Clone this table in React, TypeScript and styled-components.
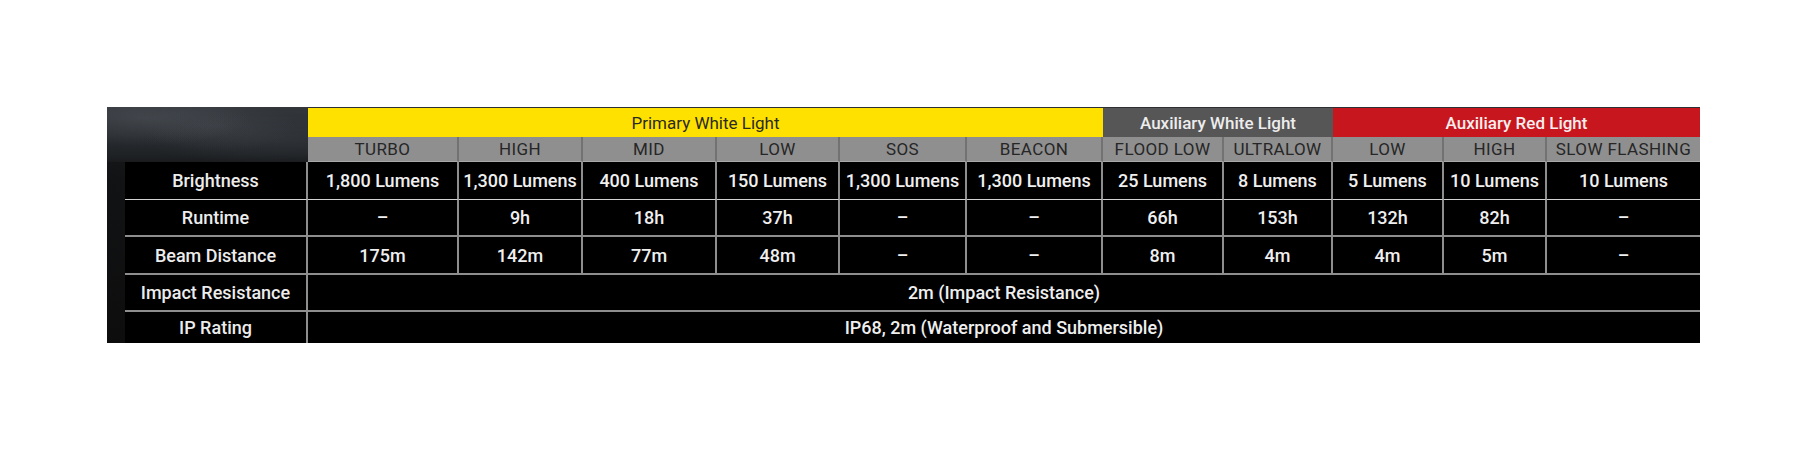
import styled, { createGlobalStyle } from "styled-components";

const GlobalStyle = createGlobalStyle`
  html, body {
    margin: 0;
    padding: 0;
    background: #ffffff;
  }
  body {
    font-family: Roboto, "Liberation Sans", Arial, sans-serif;
  }
`;

type Group = { title: string; span: number; tone: "yellow" | "gray" | "red" };

const groups: Group[] = [
  { title: "Primary White Light", span: 6, tone: "yellow" },
  { title: "Auxiliary White Light", span: 2, tone: "gray" },
  { title: "Auxiliary Red Light", span: 3, tone: "red" },
];

const modes = [
  "TURBO",
  "HIGH",
  "MID",
  "LOW",
  "SOS",
  "BEACON",
  "FLOOD LOW",
  "ULTRALOW",
  "LOW",
  "HIGH",
  "SLOW FLASHING",
];

type SpecRow = {
  label: string;
  values?: string[];
  full?: string;
  line: "thin" | "thick" | "none";
};

const rows: SpecRow[] = [
  {
    label: "Brightness",
    values: [
      "1,800 Lumens",
      "1,300 Lumens",
      "400 Lumens",
      "150 Lumens",
      "1,300 Lumens",
      "1,300 Lumens",
      "25 Lumens",
      "8 Lumens",
      "5 Lumens",
      "10 Lumens",
      "10 Lumens",
    ],
    line: "thin",
  },
  {
    label: "Runtime",
    values: ["–", "9h", "18h", "37h", "–", "–", "66h", "153h", "132h", "82h", "–"],
    line: "thick",
  },
  {
    label: "Beam Distance",
    values: ["175m", "142m", "77m", "48m", "–", "–", "8m", "4m", "4m", "5m", "–"],
    line: "thick",
  },
  { label: "Impact Resistance", full: "2m (Impact Resistance)", line: "thick" },
  { label: "IP Rating", full: "IP68, 2m (Waterproof and Submersible)", line: "none" },
];

const groupColors = {
  yellow: { bg: "#ffe100", fg: "#2a2a22", weight: 400 },
  gray: { bg: "#565656", fg: "#ededed", weight: 500 },
  red: { bg: "#c8161e", fg: "#f6eeee", weight: 500 },
};

const lineStyles = {
  thin: "1px solid #d2d2d2",
  thick: "2px solid #8e8e8e",
  none: "none",
};

export default function App() {
  return (
    <Page>
      <GlobalStyle />
      <Sheet>
        <Corner />
        {groups.map((g) => (
          <GroupCell key={g.title} $span={g.span} $tone={g.tone}>
            {g.title}
          </GroupCell>
        ))}
        {modes.map((m, idx) => (
          <ModeCell key={idx} $last={idx === modes.length - 1}>
            {m}
          </ModeCell>
        ))}
        {rows.map((row) => (
          <Row key={row.label}>
            <Strip />
            <LabelCell $line={row.line}>{row.label}</LabelCell>
            {row.full ? (
              <ValueCell $line={row.line} $span={11} $last>
                {row.full}
              </ValueCell>
            ) : (
              row.values!.map((v, idx) => (
                <ValueCell
                  key={idx}
                  $line={row.line}
                  $last={idx === row.values!.length - 1}
                >
                  {v}
                </ValueCell>
              ))
            )}
          </Row>
        ))}
      </Sheet>
    </Page>
  );
}

const Page = styled.div`
  padding: 107px 0 0 107px;
  height: 452px;
  box-sizing: border-box;
`;

const Sheet = styled.div`
  display: grid;
  width: 1593px;
  grid-template-columns: 18px 183px 151px 124px 134px 123px 127px 136px 121px 109px 111px 103px 153px;
  grid-template-rows: 29px 25px 38px 37px 38px 37px 31px;
  padding-top: 1px;
  background: linear-gradient(180deg, #1c1e21 0%, #121314 30%, #0d0d0e 100%);
  box-shadow: inset 0 1px 0 #2c2f33;
`;

const Corner = styled.div`
  grid-column: 1 / span 2;
  grid-row: 1 / span 2;
  margin-top: -1px;
  background:
    radial-gradient(ellipse at 18% 20%, rgba(110, 116, 124, 0.28), transparent 45%),
    radial-gradient(ellipse at 55% 35%, rgba(95, 100, 108, 0.22), transparent 50%),
    radial-gradient(ellipse at 85% 60%, rgba(70, 76, 84, 0.25), transparent 55%),
    linear-gradient(180deg, #33373c 0%, #2a2d31 50%, #202326 85%, #191b1d 100%);
`;

const Row = styled.div`
  display: contents;
`;

const Cell = styled.div`
  display: flex;
  align-items: center;
  justify-content: center;
  box-sizing: border-box;
  white-space: nowrap;
  overflow: hidden;
`;

const GroupCell = styled(Cell)<{ $span: number; $tone: Group["tone"] }>`
  grid-column: span ${(p) => p.$span};
  background: ${(p) => groupColors[p.$tone].bg};
  color: ${(p) => groupColors[p.$tone].fg};
  font-weight: ${(p) => groupColors[p.$tone].weight};
  font-size: 17px;
  padding-top: 1px;
`;

const ModeCell = styled(Cell)<{ $last?: boolean }>`
  background: #8f8f8f;
  color: #262626;
  font-size: 17px;
  font-weight: 400;
  letter-spacing: 0.4px;
  border-right: ${(p) => (p.$last ? "none" : "2px solid #727272")};
  border-bottom: 1px solid #a9a9a9;
`;

const Strip = styled.div`
  background: transparent;
`;

const LabelCell = styled(Cell)<{ $line: SpecRow["line"] }>`
  background: #000;
  color: #ececec;
  font-size: 18px;
  font-weight: 500;
  border-right: 2px solid #8e8e8e;
  border-bottom: ${(p) => lineStyles[p.$line]};
`;

const ValueCell = styled(Cell)<{
  $line: SpecRow["line"];
  $last?: boolean;
  $span?: number;
}>`
  grid-column: span ${(p) => p.$span ?? 1};
  background: #000;
  color: #efefef;
  font-size: 18px;
  font-weight: 500;
  border-right: ${(p) => (p.$last ? "none" : "2px solid #8e8e8e")};
  border-bottom: ${(p) => lineStyles[p.$line]};
`;
